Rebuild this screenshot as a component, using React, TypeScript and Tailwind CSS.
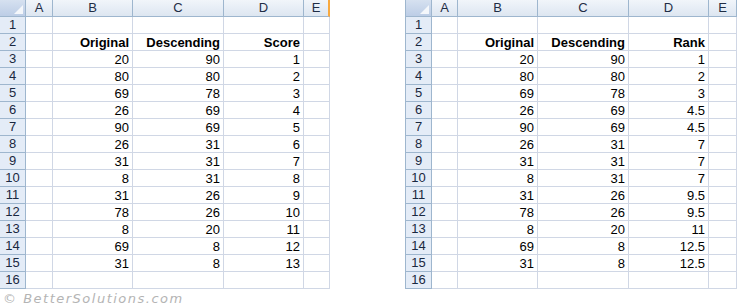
const cols = ["A", "B", "C", "D", "E"];

const original = [20, 80, 69, 26, 90, 26, 31, 8, 31, 78, 8, 69, 31];
const descending = [90, 80, 78, 69, 69, 31, 31, 31, 26, 26, 20, 8, 8];
const score = ["1", "2", "3", "4", "5", "6", "7", "8", "9", "10", "11", "12", "13"];
const rank = ["1", "2", "3", "4.5", "4.5", "7", "7", "7", "9.5", "9.5", "11", "12.5", "12.5"];

function Sheet({
  widths,
  lastLabel,
  lastCol,
  orangeEdge,
}: {
  widths: string[];
  lastLabel: string;
  lastCol: string[];
  orangeEdge?: boolean;
}) {
  const rows: (string | number)[][] = [];
  rows.push(["", "", "", "", ""]);
  rows.push(["", "Original", "Descending", lastLabel, ""]);
  original.forEach((v, i) => rows.push(["", v, descending[i], lastCol[i], ""]));
  rows.push(["", "", "", "", ""]);

  return (
    <div className="flex flex-col">
      <div className="flex h-[17px]">
        <div className="relative w-[26px] h-[17px] bg-gradient-to-b from-[#d6e1f0] to-[#bccde6] border-r border-b border-[#9eb6ce]">
          <div className="absolute right-[2px] bottom-[2px] w-0 h-0 [border-bottom:9px_solid_#f4f7fb] [border-left:9px_solid_transparent]" />
        </div>
        {cols.map((c, i) => (
          <div
            key={c}
            className={
              widths[i] +
              " h-[17px] flex items-center justify-center text-[13px] text-[#1f2d45] bg-gradient-to-b from-[#f1f5fa] to-[#dde6f1] border-b border-r border-[#9eb6ce]" +
              (orangeEdge && i === 4 ? " border-r-2 border-r-[#f8a93f]" : "")
            }
          >
            {c}
          </div>
        ))}
      </div>
      {rows.map((r, ri) => (
        <div key={ri} className="flex h-[17px]">
          <div className="w-[26px] h-[17px] flex items-center justify-center text-[13px] text-[#1a2840] bg-[#e4ecf7] border-r border-b border-[#9eb6ce]">
            {ri + 1}
          </div>
          {r.map((v, ci) => (
            <div
              key={ci}
              className={
                widths[ci] +
                " h-[17px] flex items-center justify-end pr-[3px] text-[13px] text-black border-r border-b border-[#d0d7e5] leading-none" +
                (ri === 1 ? " font-bold" : "")
              }
            >
              {v}
            </div>
          ))}
        </div>
      ))}
    </div>
  );
}

export default function App() {
  return (
    <div className="w-[738px] h-[308px] bg-white relative font-['Liberation_Sans',Arial,sans-serif]">
      <div className="flex">
        <Sheet
          widths={["w-[27px]", "w-[80px]", "w-[91px]", "w-[80px]", "w-[26px]"]}
          lastLabel="Score"
          lastCol={score}
          orangeEdge
        />
        <div className="w-[75px]" />
        <div className="border-l border-[#9eb6ce]">
          <Sheet
            widths={["w-[26px]", "w-[80px]", "w-[91px]", "w-[80px]", "w-[28px]"]}
            lastLabel="Rank"
            lastCol={rank}
          />
        </div>
      </div>
      <div className="pl-[3px] pt-[3px] text-[13px] italic tracking-[1.5px] text-[#b4b4b4] font-['DejaVu_Sans',sans-serif] leading-none">
        © BetterSolutions.com
      </div>
    </div>
  );
}
